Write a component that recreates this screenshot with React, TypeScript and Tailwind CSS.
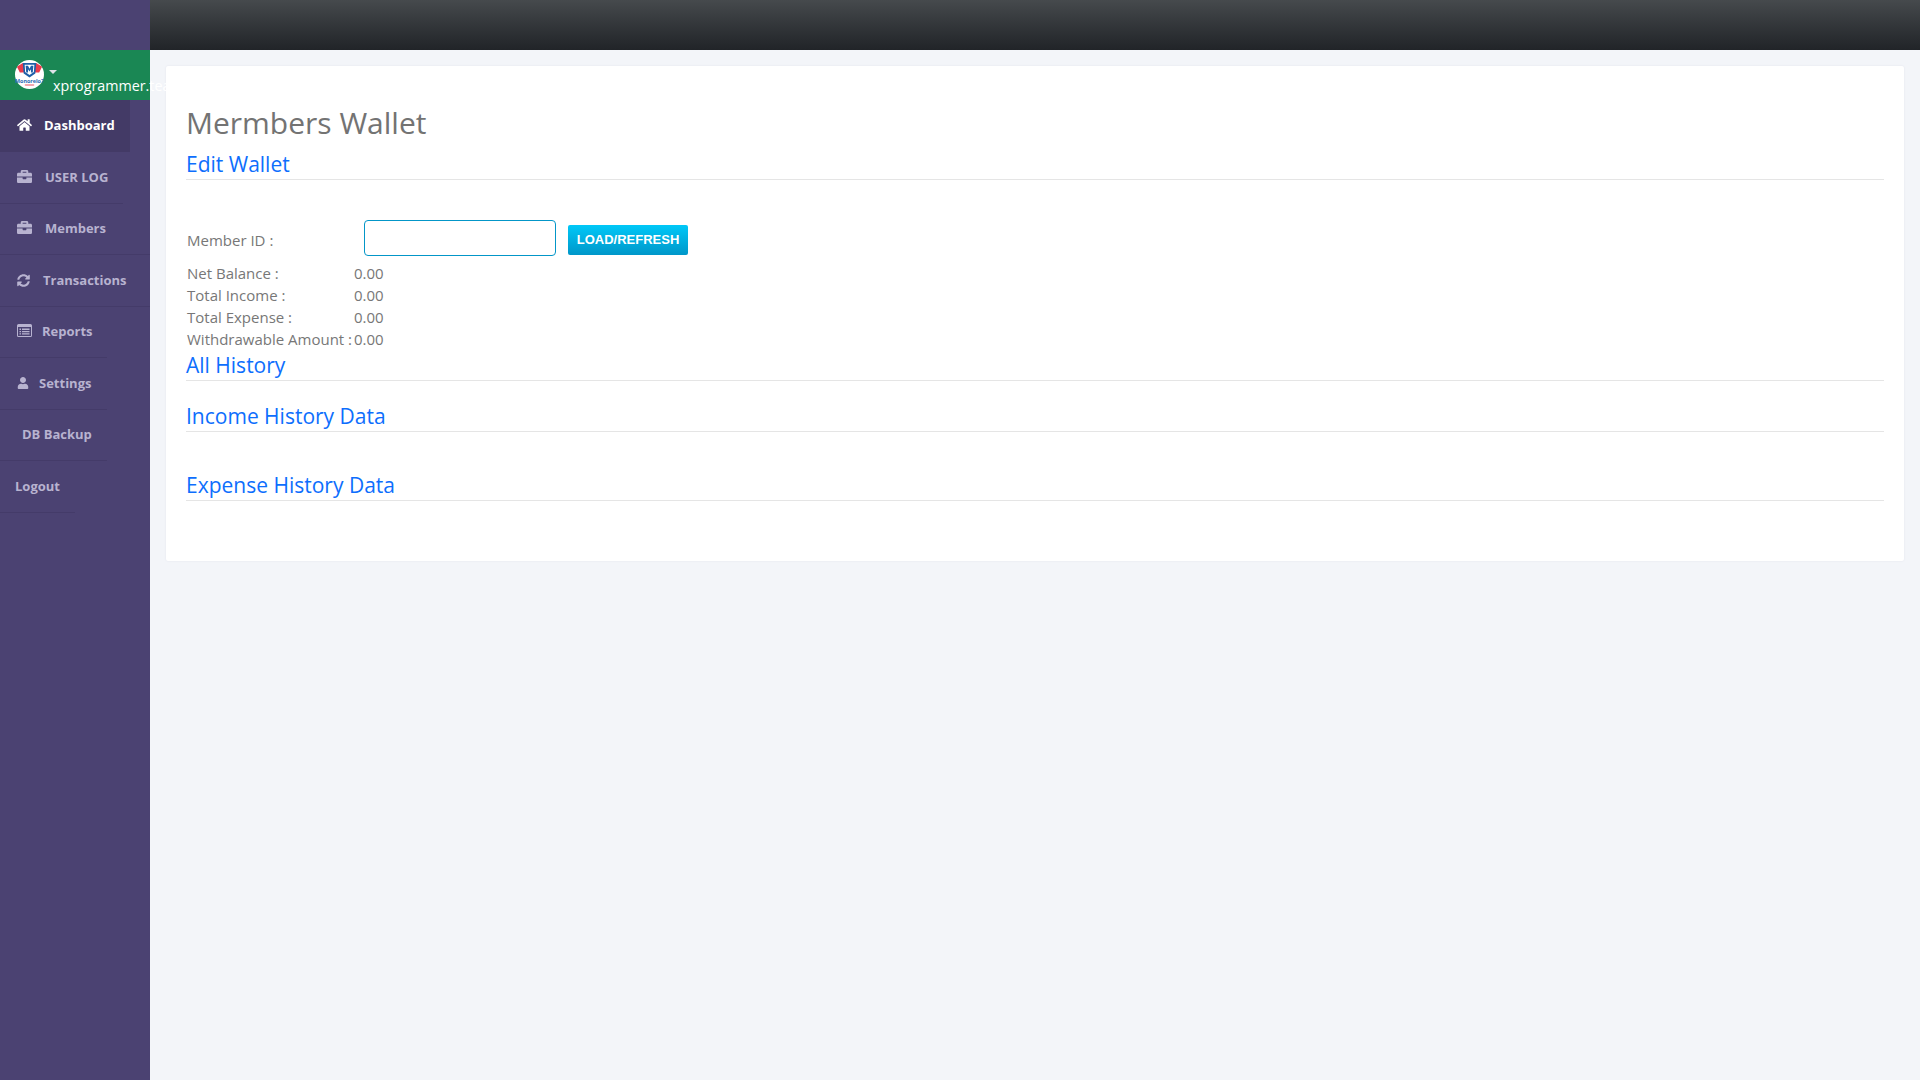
import type { ReactNode } from 'react';
import { FaBriefcase, FaHome, FaSyncAlt, FaUser } from 'react-icons/fa';

interface NavItem {
  label: string;
  icon?: ReactNode;
  textClass: string;
  lineClass: string;
}

const ListIcon = () => (
  <svg viewBox="0 0 15 13" className="h-[13px] w-[15px] -translate-y-px" fill="currentColor">
    <path d="M1.5 0h12A1.5 1.5 0 0 1 15 1.5v10a1.5 1.5 0 0 1-1.5 1.5h-12A1.5 1.5 0 0 1 0 11.5v-10A1.5 1.5 0 0 1 1.5 0zM1 3v8.5a.5.5 0 0 0 .5.5h12a.5.5 0 0 0 .5-.5V3z" />
    <path d="M2.5 4.5h1.5V6H2.5zM5 4.5h7.5V6H5zM2.5 7h1.5v1.2H2.5zM5 7h7.5v1.2H5zM2.5 9.2h1.5v1.2H2.5zM5 9.2h7.5v1.2H5z" />
  </svg>
);

const navItems: NavItem[] = [
  { label: 'USER LOG', icon: <FaBriefcase className="h-[15px] w-[15px] -translate-y-px" />, textClass: 'pl-[17px] gap-[13px]', lineClass: 'w-[123px]' },
  { label: 'Members', icon: <FaBriefcase className="h-[15px] w-[15px] -translate-y-px" />, textClass: 'pl-[17px] gap-[13px]', lineClass: 'w-[150px]' },
  { label: 'Transactions', icon: <FaSyncAlt className="h-[13px] w-[13px]" />, textClass: 'pl-[17px] gap-[13px]', lineClass: 'w-[150px]' },
  { label: 'Reports', icon: <ListIcon />, textClass: 'pl-[17px] gap-[10px]', lineClass: 'w-[107px]' },
  { label: 'Settings', icon: <FaUser className="h-[12px] w-[12px]" />, textClass: 'pl-[17px] gap-[10px]', lineClass: 'w-[107px]' },
  { label: 'DB Backup', textClass: 'pl-[22px]', lineClass: 'w-[107px]' },
  { label: 'Logout', textClass: 'pl-[15px]', lineClass: 'w-[75px]' },
];

const stats = [
  { label: 'Net Balance :', value: '0.00' },
  { label: 'Total Income :', value: '0.00' },
  { label: 'Total Expense :', value: '0.00' },
  { label: 'Withdrawable Amount :', value: '0.00' },
];

const SectionTitle = ({ children, className }: { children: ReactNode; className: string }) => (
  <h3 className={`border-b border-[#e5e5e5] text-[21px] leading-[29px] font-normal text-[#0d6efd] ${className}`}>
    {children}
  </h3>
);

const Logo = () => (
  <svg viewBox="0 0 30 30" className="h-[29px] w-[29px] shrink-0">
    <circle cx="15" cy="15" r="15" fill="#fff" />
    <path d="M2 7 L8 3 L10 8 L20 8 L22 3 L28 7 L25 13 L5 13 Z" fill="#ea3b4c" />
    <path d="M8 3 H22 L21 14 L15 18 L9 14 Z" fill="#1e5fa8" />
    <path d="M10 5 H20 L19.5 12.5 L15 15.5 L10.5 12.5 Z" fill="#fff" />
    <path d="M11 6 H13.5 L15 9 L16.5 6 H19 L18.4 13 H16.5 L16.6 9.5 L15 12 L13.4 9.5 L13.5 13 H11.6 Z" fill="#1e5fa8" />
    <text x="15" y="23.5" textAnchor="middle" fontSize="5.6" fontWeight="700" fill="#2d6db5">Monorelo7</text>
    <rect x="10" y="25" width="10" height="1.6" rx="0.8" fill="#ee8a94" />
  </svg>
);

export default function App() {
  return (
    <div className="flex min-h-[1080px] bg-[#f3f5f9] font-['Open_Sans',sans-serif]">
      {/* Sidebar */}
      <aside className="relative z-10 w-[150px] shrink-0 bg-[#4b4272]">
        <div className="h-[50px]" />
        <div className="flex h-[50px] items-start bg-[#1a8754] pl-[15px] pt-[10px]">
          <Logo />
          <div className="relative ml-[5px] w-0">
            <span className="mt-[10px] block h-0 w-0 border-x-[4px] border-t-[4px] border-x-transparent border-t-[#dfe3e8]" />
            <span className="ml-[4px] block whitespace-nowrap pt-[2px] text-[14.3px] leading-[20px] text-white">xprogrammer.team</span>
          </div>
        </div>

        <nav className="text-[13px] font-bold text-[#b8b3d0]">
          <div className="flex h-[52px] w-[130px] items-center gap-[12px] bg-[#433a66] pl-[17px] text-white">
            <FaHome className="h-[14px] w-[15px] -translate-y-px" />
            <span>Dashboard</span>
          </div>
          {navItems.map((item) => (
            <div key={item.label}>
              <div className={`flex h-[50.5px] items-center ${item.textClass}`}>
                {item.icon}
                <span>{item.label}</span>
              </div>
              <div className={`h-px bg-[#443b69] ${item.lineClass}`} />
            </div>
          ))}
        </nav>
      </aside>

      <div className="min-w-0 flex-1">
        {/* Top bar */}
        <div className="h-[50px] bg-gradient-to-b from-[#464a4d] to-[#212428]" />

        {/* Card */}
        <main className="mx-4 mt-4 h-[495px] rounded-[2px] bg-white px-5 pt-[36px] shadow-[0_0_2px_#dfe3ec]">
          <h1 className="text-[30px] leading-[42px] font-normal text-[#737373]">Mermbers Wallet</h1>
          <SectionTitle className="h-[36px] pt-[6px]">Edit Wallet</SectionTitle>

          <div className="mt-[40px] flex items-center text-[15px] text-[#777]">
            <label className="w-[178px] pl-px pt-[4px]">Member ID :</label>
            <input className="h-[36px] w-[192px] rounded-[4px] border border-[#0396c8] bg-white outline-none" />
            <button className="mt-[3px] ml-3 h-[30px] w-[120px] rounded-[2px] bg-gradient-to-b from-[#00c8f8] to-[#0097c9] text-center font-['Liberation_Sans',sans-serif] text-[13px] font-bold text-white">
              LOAD/REFRESH
            </button>
          </div>

          <div className="mt-[6px] text-[15px] leading-[22px] text-[#777]">
            {stats.map((row) => (
              <div key={row.label} className="flex pl-px">
                <span className="w-[167px] shrink-0 whitespace-nowrap">{row.label}</span>
                <span>{row.value}</span>
              </div>
            ))}
          </div>

          <SectionTitle className="h-[31px] pt-px">All History</SectionTitle>
          <SectionTitle className="mt-[21px] h-[30px]">Income History Data</SectionTitle>
          <SectionTitle className="mt-[39px] h-[30px]">Expense History Data</SectionTitle>
        </main>
      </div>
    </div>
  );
}
